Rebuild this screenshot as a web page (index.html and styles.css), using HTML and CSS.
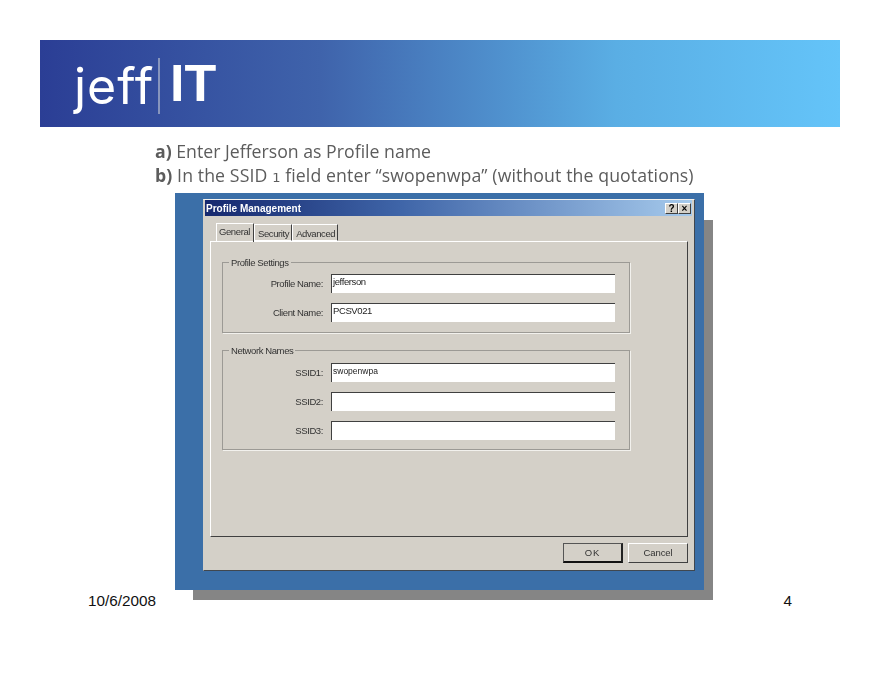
FILE: index.html
```html
<!DOCTYPE html>
<html lang="en">
<head>
<meta charset="utf-8">
<title>Profile Management</title>
<link rel="stylesheet" href="styles.css">
</head>
<body>
<div class="slide">
  <header class="banner">
    <div class="logo"><span class="logo-jeff">jeff</span><span class="logo-rule"></span><span class="logo-it">IT</span></div>
  </header>
  <div class="steps">
    <p class="step"><b>a)</b> Enter Jefferson as Profile name</p>
    <p class="step step-long"><b>b)</b> In the SSID <span class="oldnum">1</span> field enter “swopenwpa” (without the quotations)</p>
  </div>
  <div class="shot">
    <div class="shot-shadow"></div>
    <div class="dialog">
      <div class="titlebar">
        <span class="title">Profile Management</span>
        <span class="winbtns"><span class="winbtn">?</span><span class="winbtn">×</span></span>
      </div>
      <div class="tabs">
        <span class="tab tab-active">General</span>
        <span class="tab">Security</span>
        <span class="tab">Advanced</span>
      </div>
      <div class="panel">
        <section class="group group-profile">
          <span class="legend">Profile Settings</span>
          <div class="row"><label class="label">Profile Name:</label><div class="field">jefferson</div></div>
          <div class="row"><label class="label">Client Name:</label><div class="field">PCSV021</div></div>
        </section>
        <section class="group group-network">
          <span class="legend">Network Names</span>
          <div class="row"><label class="label">SSID1:</label><div class="field field-small">swopenwpa</div></div>
          <div class="row"><label class="label">SSID2:</label><div class="field"></div></div>
          <div class="row"><label class="label">SSID3:</label><div class="field"></div></div>
        </section>
      </div>
      <div class="actions">
        <span class="btn btn-default">OK</span>
        <span class="btn btn-cancel">Cancel</span>
      </div>
    </div>
  </div>
  <footer class="foot"><span>10/6/2008</span><span>4</span></footer>
</div>
</body>
</html>
```
FILE: styles.css
```css
* { box-sizing: border-box; }
html, body { margin: 0; padding: 0; }
.slide { width: 880px; height: 680px; padding-top: 40px; overflow: hidden; }

.banner {
  margin: 0 40px;
  height: 87px;
  background: linear-gradient(90deg, #2b3e95 0%, #3f63ab 35%, #5aaee4 72%, #64c4f9 100%);
  padding: 18px 0 0 34px;
}
.logo { display: flex; align-items: flex-start; color: #fff; filter: blur(0.4px); }
.logo-jeff { font: 400 50px/52px "Inter", sans-serif; letter-spacing: 1px; width: 84px; margin-top: 2px; }
.logo-rule { width: 2px; height: 56px; background: #8795bd; margin-right: 10px; }
.logo-it { font: 700 52px/46px "Liberation Sans", sans-serif; letter-spacing: 0; margin-top: 2px; }

.steps { margin: 12px 0 0 155px; color: #5c5c5c; font: 17.7px/24px "Open Sans", sans-serif; filter: blur(0.2px); }
.step { margin: 0; white-space: nowrap; }
.step b { font-weight: 700; }
.step-long { letter-spacing: 0.1px; }
.oldnum { font: 13px "DejaVu Sans", sans-serif; }

.shot {
  position: relative;
  width: 529px;
  height: 397px;
  margin: 6px 0 0 175px;
  background: #3b6fa8;
  padding: 6px 9px 0 28px;
}
.shot-shadow {
  position: absolute;
  z-index: -1;
  left: 18px;
  top: 27px;
  width: 520px;
  height: 380px;
  background: #858585;
}

.dialog {
  width: 492px;
  height: 372px;
  background: #d4d0c8;
  border-top: 1px solid #f4f2ee;
  border-right: 1px solid #40474f;
  border-bottom: 1px solid #40474f;
  border-left: 1px solid #d4d0c8;
  padding: 0 6px;
  color: #333;
  font: 9.5px "Liberation Sans", sans-serif;
  letter-spacing: -0.4px;
  filter: blur(0.35px);
  display: flex;
  flex-direction: column;
}
.titlebar {
  height: 16px;
  margin: 0 -4px 0 -5px;
  padding: 0 1px;
  background: linear-gradient(90deg, #16286e 0%, #3f65a8 40%, #a6caec 100%);
  display: flex;
  align-items: center;
  justify-content: space-between;
}
.title { color: #fff; font: 700 10px "Liberation Sans", sans-serif; letter-spacing: 0; }
.winbtns { display: flex; }
.winbtn {
  width: 13px; height: 11px;
  background: #d4d0c8;
  border: 1px solid;
  border-color: #fff #404040 #404040 #fff;
  color: #000;
  font: 700 10px/9px "Liberation Sans", sans-serif;
  letter-spacing: 0;
  text-align: center;
}

.tabs { display: flex; height: 25px; align-items: flex-end; padding-left: 6px; }
.tab {
  height: 17px;
  padding: 3px 2px 0 3px;
  border-left: 1px solid #fff;
  border-top: 1px solid #fff;
  border-right: 1px solid #404040;
  border-bottom: 1px solid #fff;
  white-space: nowrap;
}
.tab-active { height: 19px; padding: 2px 3px 0 2px; border-bottom: 0; position: relative; top: 1px; }

.panel {
  width: 478px;
  height: 296px;
  border-left: 1px solid #fff;
  border-top: 1px solid #fff;
  border-right: 1px solid #404040;
  border-bottom: 1px solid #404040;
  padding: 20px 0 0 11px;
}
.group {
  position: relative;
  width: 408px;
  border: 1px solid #9c9a95;
  box-shadow: 1px 1px 0 #f2f1ed;
  display: flex;
  flex-direction: column;
  gap: 10px;
}
.group-profile { height: 71px; padding-top: 11px; }
.group-network { height: 100px; margin-top: 17px; padding-top: 12px; }
.legend { position: absolute; left: 6px; top: -6px; padding: 0 2px; background: #d4d0c8; line-height: 12px; }
.row { display: grid; grid-template-columns: 100px 284px; column-gap: 8px; align-items: center; height: 19px; }
.label { text-align: right; }
.field {
  height: 19px;
  background: #fff;
  border-left: 1px solid #404040;
  border-top: 1px solid #404040;
  padding: 0 0 2px 1px;
  line-height: 14px;
  color: #222;
}
.field-small { font-size: 8.5px; letter-spacing: 0; }

.actions { display: flex; justify-content: flex-end; gap: 5px; padding: 6px 0 0; }
.btn {
  width: 60px;
  height: 20px;
  border: 1px solid;
  border-color: #fff #404040 #404040 #fff;
  text-align: center;
  line-height: 18px;
}
.btn-cancel { letter-spacing: -0.1px; }
.btn-default { border-right-width: 2px; border-bottom-width: 2px; border-color: #555 #222 #111 #555; letter-spacing: 1px; }

.foot {
  display: flex;
  justify-content: space-between;
  margin: 3px 88px 0 88px;
  color: #111;
  font: 15.3px/16px "Liberation Sans", sans-serif;
}
```
